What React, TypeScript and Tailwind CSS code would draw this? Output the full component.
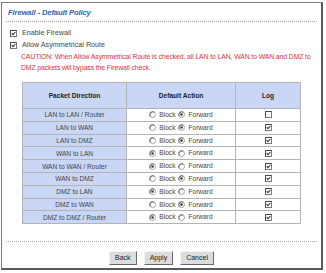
import React from "react";

const Check = ({ checked }: { checked: boolean }) => (
  <svg width="7" height="7" viewBox="0 0 7 7" className="inline-block shrink-0">
    <rect x="0.5" y="0.5" width="6" height="6" fill="#fff" stroke="#7a7a7a" />
    <path d="M0.5 0.5 H6.5 M0.5 0.5 V6.5" stroke="#484848" strokeWidth="1" />
    {checked && <path d="M1.7 3.2 L3 4.6 L5.4 2" stroke="#333" strokeWidth="1.1" fill="none" />}
  </svg>
);

const Radio = ({ on }: { on: boolean }) => (
  <svg width="7" height="7" viewBox="0 0 7 7" className="inline-block shrink-0">
    <circle cx="3.5" cy="3.5" r="3" fill="#fff" stroke="#9a9a9a" strokeWidth="0.9" />
    <path d="M1.2 5.2 A3 3 0 0 1 5.2 1.2" stroke="#5a5a5a" strokeWidth="0.9" fill="none" />
    {on && <circle cx="3.5" cy="3.5" r="1.3" fill="#3a3a3a" />}
  </svg>
);

const rows: [string, boolean, boolean][] = [
  ["LAN to LAN / Router", false, false],
  ["LAN to WAN", false, true],
  ["LAN to DMZ", false, true],
  ["WAN to LAN", true, true],
  ["WAN to WAN / Router", true, true],
  ["WAN to DMZ", false, true],
  ["DMZ to LAN", true, true],
  ["DMZ to WAN", false, true],
  ["DMZ to DMZ / Router", true, true],
];

export default function App() {
  return (
    <div
      className="w-[326px] h-[273px] bg-white pt-[2px] pl-[1px]"
      style={{ fontFamily: '"Liberation Sans", Arial, sans-serif' }}
    >
      <div className="w-[322px] h-[268px] border border-[#7a7a7a] border-r-2 border-b-2 border-r-[#5a5a5a] border-b-[#5a5a5a] flex flex-col">
        <div className="pl-[6px] pt-[5px] h-[18px] text-[7.6px] leading-[10px] font-bold italic text-[#2d64b4] tracking-[-0.1px]">
          Firewall - Default Policy
        </div>
        <div className="mx-[4px] border-t border-dotted border-[#a8a8a8]" />
        <div className="pl-[8px] pt-[6px] flex items-center gap-[5px] text-[7.2px] leading-[10px] text-[#444]">
          <Check checked />
          <span>Enable Firewall</span>
        </div>
        <div className="pl-[8px] pt-[2px] flex items-center gap-[5px] text-[7.2px] leading-[10px] text-[#444]">
          <Check checked />
          <span>Allow Asymmetrical Route</span>
        </div>
        <div className="pl-[19px] pt-[1px] text-[6.85px] leading-[11px] text-[#e0303a] tracking-[-0.1px]">
          CAUTION: When Allow Asymmetrical Route is checked, all LAN to LAN, WAN to WAN and DMZ to
          <br />
          DMZ packets will bypass the Firewall check.
        </div>
        <div className="pt-[9px] flex justify-center">
          <table className="border-collapse w-[279px] text-[6.6px] text-[#444] border border-[#a8a8a8]">
            <thead>
              <tr className="h-[26px] bg-[#c9d6f6]">
                <th className="w-[104px] border border-[#b4b4b4] font-bold text-[#222]">Packet Direction</th>
                <th className="w-[109px] border border-[#b4b4b4] font-bold text-[#222]">Default Action</th>
                <th className="border border-[#b4b4b4] font-bold text-[#222]">Log</th>
              </tr>
            </thead>
            <tbody>
              {rows.map(([name, block, log]) => (
                <tr key={name} className="h-[12.8px]">
                  <td className="bg-[#c9d6f6] border border-[#b4b4b4] text-center leading-[11px] p-0">{name}</td>
                  <td className="border border-[#b4b4b4] p-0">
                    <div className="flex items-center justify-center gap-[3px]">
                      <Radio on={block} />
                      <span>Block</span>
                      <Radio on={!block} />
                      <span>Forward</span>
                    </div>
                  </td>
                  <td className="border border-[#b4b4b4] p-0">
                    <div className="flex justify-center">
                      <Check checked={log} />
                    </div>
                  </td>
                </tr>
              ))}
            </tbody>
          </table>
        </div>
        <div className="mt-[17px] mx-[4px] border-t border-dotted border-[#a8a8a8]" />
        <div className="pt-[9px] flex justify-center gap-[7px]">
          {["Back", "Apply", "Cancel"].map((b) => (
            <div
              key={b}
              className="h-[14px] px-[5px] bg-[#dcdcdc] border border-[#f4f4f4] border-r-[#6a6a6a] border-b-[#6a6a6a] text-[7px] leading-[12px] text-[#222] flex items-center"
            >
              {b}
            </div>
          ))}
        </div>
      </div>
    </div>
  );
}
